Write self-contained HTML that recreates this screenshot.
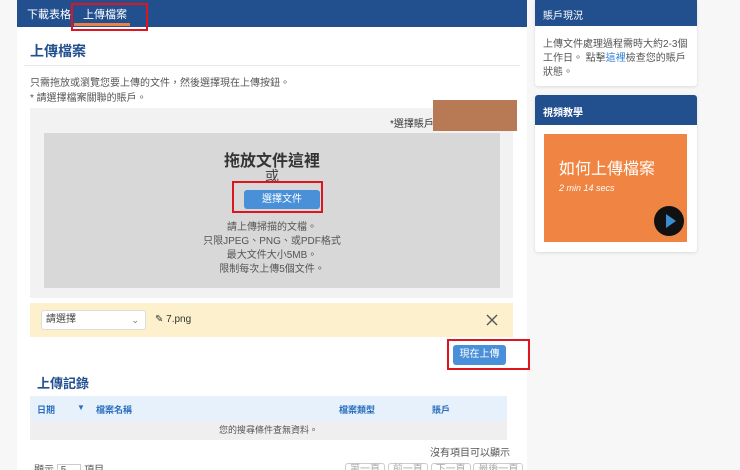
<!DOCTYPE html>
<html><head><meta charset="utf-8"><style>
*{margin:0;padding:0;box-sizing:border-box}
html,body{width:740px;height:470px;overflow:hidden}
body{background:#f7f7f7;font-family:"Liberation Sans","Noto Sans CJK TC",sans-serif;position:relative;color:#444}
.a{position:absolute}
.nav{background:#22508f;color:#fff}
.t{font-size:10px;color:#555;white-space:nowrap}
</style></head><body>
<div class="a" style="left:17px;top:0;width:510px;height:470px;background:#fff"></div>
<div class="a nav" style="left:17px;top:0;width:510px;height:27px"></div>
<div class="a" style="left:27px;top:6px;color:#fff;font-size:11px">下載表格</div>
<div class="a" style="left:83px;top:6px;color:#fff;font-size:11px">上傳檔案</div>
<div class="a" style="left:74px;top:23px;width:56px;height:3px;background:#e8834a"></div>
<div class="a" style="left:71px;top:3px;width:77px;height:28px;border:2px solid #e0141e"></div>
<div class="a" style="left:30px;top:41px;font-size:14px;font-weight:bold;color:#22508f">上傳檔案</div>
<div class="a" style="left:24px;top:65px;width:496px;height:1px;background:#e8e8e8"></div>
<div class="a t" style="left:30px;top:74px">只需拖放或瀏覽您要上傳的文件，然後選擇現在上傳按鈕。</div>
<div class="a t" style="left:30px;top:89px">* 請選擇檔案關聯的賬戶。</div>
<div class="a" style="left:30px;top:108px;width:483px;height:190px;background:#f2f2f2"></div>
<div class="a" style="left:44px;top:133px;width:456px;height:155px;background:#d8d8d8"></div>
<div class="a t" style="left:390px;top:115px;color:#333">*選擇賬戶:</div>
<div class="a" style="left:433px;top:100px;width:84px;height:31px;background:#b87a55"></div>
<div class="a" style="left:44px;top:147px;width:456px;text-align:center;font-size:16px;font-weight:bold;color:#333">拖放文件這裡</div>
<div class="a" style="left:44px;top:166px;width:456px;text-align:center;font-size:14px;color:#444">或</div>
<div class="a" style="left:244px;top:190px;width:76px;height:19px;background:#4a90d9;border-radius:3px;color:#fff;font-size:10px;text-align:center;line-height:19px">選擇文件</div>
<div class="a" style="left:232px;top:181px;width:91px;height:32px;border:2px solid #e0141e"></div>
<div class="a t" style="left:44px;top:221px;width:456px;text-align:center;line-height:14px">請上傳掃描的文檔。<br>只限JPEG、PNG、或PDF格式<br>最大文件大小5MB。<br>限制每次上傳5個文件。</div>
<div class="a" style="left:30px;top:303px;width:483px;height:34px;background:#fcf1cc"></div>
<div class="a" style="left:41px;top:310px;width:105px;height:20px;background:#fff;border:1px solid #ddd;border-radius:3px;font-size:10px;line-height:18px;padding:0 4px;color:#444">請選擇<span style="position:absolute;right:6px;top:0;font-size:9px;color:#777">⌄</span></div>
<div class="a" style="left:155px;top:314px;font-size:10px;color:#333">✎ 7.png</div>
<svg class="a" style="left:486px;top:314px" width="12" height="12"><path d="M1 1L11 11M11 1L1 11" stroke="#555" stroke-width="1.4"/></svg>
<div class="a" style="left:453px;top:345px;width:53px;height:20px;background:#4a90d9;border-radius:3px;color:#fff;font-size:10px;text-align:center;line-height:20px">現在上傳</div>
<div class="a" style="left:447px;top:339px;width:83px;height:31px;border:2px solid #e0141e"></div>
<div class="a" style="left:37px;top:373px;font-size:13px;font-weight:bold;color:#22508f">上傳記錄</div>
<div class="a" style="left:30px;top:396px;width:477px;height:25px;background:#e6f1fb"></div>
<div class="a" style="left:37px;top:403px;font-size:9px;font-weight:bold;color:#2a6fbf">日期</div>
<div class="a" style="left:77px;top:403px;font-size:8px;color:#2a6fbf">▼</div>
<div class="a" style="left:96px;top:403px;font-size:9px;font-weight:bold;color:#2a6fbf">檔案名稱</div>
<div class="a" style="left:339px;top:403px;font-size:9px;font-weight:bold;color:#2a6fbf">檔案類型</div>
<div class="a" style="left:432px;top:403px;font-size:9px;font-weight:bold;color:#2a6fbf">賬戶</div>
<div class="a" style="left:30px;top:421px;width:477px;height:19px;background:#efefef;font-size:9px;text-align:center;line-height:19px;color:#555">您的搜尋條件查無資料。</div>
<div class="a t" style="left:380px;top:444px;width:130px;text-align:right">沒有項目可以顯示</div>
<div class="a t" style="left:34px;top:461px">顯示 <span style="border:1px solid #ccc;padding:0 14px 0 3px">5</span> 項目</div>
<div class="a t" style="left:345px;top:460px;color:#aaa"><span style="border:1px solid #ccc;border-radius:3px;padding:0 4px">第一頁</span> <span style="border:1px solid #ccc;border-radius:3px;padding:0 4px">前一頁</span> <span style="border:1px solid #ccc;border-radius:3px;padding:0 4px">下一頁</span> <span style="border:1px solid #ccc;border-radius:3px;padding:0 4px">最後一頁</span></div>

<div class="a" style="left:535px;top:0;width:162px;height:86px;background:#fff;border-radius:3px;box-shadow:0 1px 3px rgba(0,0,0,.12)"></div>
<div class="a nav" style="left:535px;top:0;width:162px;height:26px;font-size:10px;padding:7px 8px">賬戶現況</div>
<div class="a t" style="left:543px;top:38px;width:150px;white-space:normal;line-height:14px">上傳文件處理過程需時大約2-3個工作日。 點擊<span style="color:#2a7fd4">這裡</span>檢查您的賬戶狀態。</div>
<div class="a" style="left:535px;top:95px;width:162px;height:157px;background:#fff;border-radius:3px;box-shadow:0 1px 3px rgba(0,0,0,.12)"></div>
<div class="a nav" style="left:535px;top:95px;width:162px;height:30px;font-size:10px;font-weight:bold;padding:9px 8px;border-radius:3px 3px 0 0">視頻教學</div>
<div class="a" style="left:544px;top:134px;width:143px;height:108px;background:#f08442"></div>
<div class="a" style="left:559px;top:155px;color:#fff;font-size:16px">如何上傳檔案</div>
<div class="a" style="left:559px;top:183px;color:#fff;font-size:9px;font-style:italic">2 min 14 secs</div>
<div class="a" style="left:654px;top:206px;width:30px;height:30px;border-radius:50%;background:#111"></div>
<div class="a" style="left:666px;top:214px;width:0;height:0;border-left:10px solid #3a8fd0;border-top:7px solid transparent;border-bottom:7px solid transparent"></div>
</body></html>
